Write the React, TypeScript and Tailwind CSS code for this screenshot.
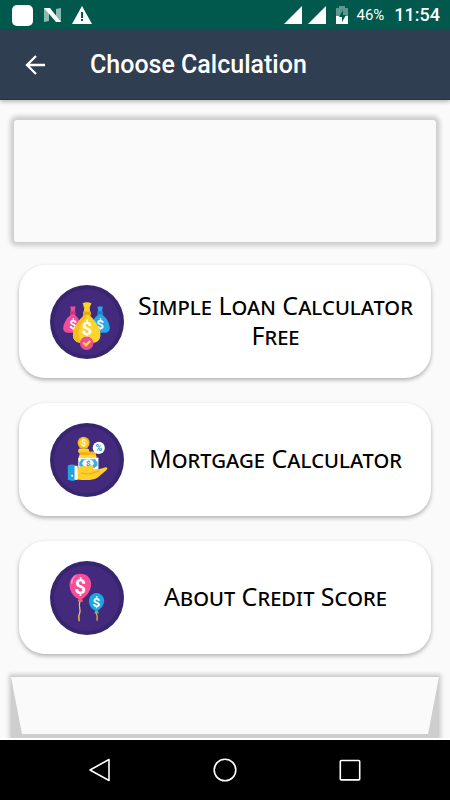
import type { ReactNode } from 'react';

function DollarSign({ x, y, size, fill = '#ffffff' }: { x: number; y: number; size: number; fill?: string }) {
  return (
    <text x={x} y={y} fontSize={size} fill={fill} fontWeight="700" textAnchor="middle" fontFamily="Roboto, sans-serif">
      $
    </text>
  );
}

function MoneyBagsIcon() {
  return (
    <svg viewBox="0 0 220 220" className="size-[74px] shrink-0" aria-hidden="true">
      <circle cx="110" cy="110" r="110" fill="#38256f" />
      <circle cx="110" cy="110" r="98" fill="#432a7d" />
      {/* Left bag */}
      <path d="M60 64h16l-2 10 1 15c12 12 20 30 19 41q-2 12-14 12H54q-14-1-15-13 2-24 22-40l1-15z" fill="#ef4d97" />
      <path d="M60 78h16v9H60z" fill="#c9357d" />
      {/* Right bag */}
      <path d="M141 64h16l-2 10 1 15c14 10 21 24 22 40q-2 12-15 13h-27q-13-2-14-12 1-26 20-41l1-15z" fill="#27a9e8" />
      <path d="M141 78h17v9h-17z" fill="#1684c9" />
      <DollarSign x={69} y={131} size={40} />
      <DollarSign x={149} y={131} size={40} />
      {/* Front bag */}
      <path d="M97 54q12-5 26 0l-5 13 2 25c18 18 31 39 30 58-2 17-12 21-25 22H93c-15-1-24-8-25-22 2-26 18-46 31-58l3-25z" fill="#fdd42c" />
      <path d="M97 54l5 13-3 25c-15 16-30 35-31 58 1 14 10 21 25 22-18-31-3-59 15-77z" fill="#f6bd19" />
      <path d="M98 79h24v10H98z" fill="#e5a817" />
      <DollarSign x={110} y={150} size={56} />
      <circle cx="109" cy="173" r="20" fill="#ef4d8b" />
      <path d="M99 171l8 8 13-13" fill="none" stroke="#ffdf3e" strokeWidth="7" />
    </svg>
  );
}

function MortgageIcon() {
  return (
    <svg viewBox="0 0 220 220" className="size-[74px] shrink-0" aria-hidden="true">
      <circle cx="110" cy="110" r="110" fill="#38256f" />
      <circle cx="110" cy="110" r="98" fill="#432a7d" />
      {/* Coin stacks */}
      <rect x="84" y="76" width="32" height="14" rx="5" fill="#ffd331" />
      <rect x="88" y="85" width="49" height="12" rx="4" fill="#f4b820" />
      <rect x="86" y="95" width="52" height="12" rx="4" fill="#ffda3c" />
      <path d="M88 92h26M92 103h40" stroke="#df9c19" strokeWidth="2" />
      <circle cx="100" cy="59" r="18" fill="#f5b51e" />
      <circle cx="100" cy="59" r="13" fill="#ffd13a" />
      <DollarSign x={100} y={68} size={25} fill="#fff7c4" />
      <circle cx="145" cy="74" r="18" fill="#ffffff" />
      <text x="145" y="84" fontSize="27" fontWeight="700" fill="#159bd2" textAnchor="middle" fontFamily="Roboto, sans-serif">
        %
      </text>
      {/* Bank note */}
      <path d="M84 103h60v36H84z" fill="#ffffff" />
      <path d="M92 108h43q2 7 6 7v13q-5 0-7 5H93q-2-5-6-5v-13q5 0 5-7z" fill="#39aee0" />
      <ellipse cx="113" cy="120" rx="17" ry="12" fill="#ffffff" />
      <DollarSign x={114} y={128} size={24} fill="#168fc8" />
      {/* Hand and cuff */}
      <path d="M78 134c14-8 26-5 36-6 8-6 17-2 14 8l-5 4c14-1 27-3 40-8 8-1 9 3 5 8l-26 22c-18 11-42 8-64 5z" fill="#ffd02c" />
      <path d="M93 148c22 8 39-1 54-7" fill="none" stroke="#f2ae1b" strokeWidth="4" />
      <path d="M71 127h11v42H71z" fill="#ffffff" />
      <path d="M53 126q10-4 20-2v48q-11 1-20-3z" fill="#20a4df" />
      <circle cx="66" cy="157" r="3" fill="#ffffff" />
    </svg>
  );
}

function BalloonsIcon() {
  return (
    <svg viewBox="0 0 220 220" className="size-[74px] shrink-0" aria-hidden="true">
      <circle cx="110" cy="110" r="110" fill="#38256f" />
      <circle cx="110" cy="110" r="98" fill="#432a7d" />
      <path d="M89 119c-6 20 4 22-1 37-5 8-2 15-1 23" fill="none" stroke="#e9c65c" strokeWidth="4" />
      <path d="M138 151c-2 10 4 11 2 18v9" fill="none" stroke="#dfa758" strokeWidth="4" />
      <path d="M90 38c20 0 34 14 32 35-2 20-17 38-32 42-18-5-31-22-32-42 0-21 13-35 32-35z" fill="#f64d9b" />
      <path d="M62 61q6-16 18-20-12 11-13 26-5 5-5-6z" fill="#ff8dbe" />
      <path d="M84 114h12l2 7H82z" fill="#f36a53" />
      <path d="M138 95c14 1 23 10 23 25-2 15-11 24-23 30-14-6-22-17-22-30 0-15 9-24 22-25z" fill="#18a8e2" />
      <path d="M134 149h9l2 7h-13z" fill="#54bd91" />
      <DollarSign x={90} y={97} size={60} />
      <DollarSign x={138} y={136} size={40} />
    </svg>
  );
}

function CalculationCard({ icon, label }: { icon: ReactNode; label: string }) {
  return (
    <button
      type="button"
      className="flex h-[113px] w-full items-center rounded-[26px] bg-white pl-[31px] pr-1 shadow-[0_2px_4px_rgba(0,0,0,0.3)]"
    >
      {icon}
      <span className="flex-1 px-2 pb-1 text-center font-['Noto_Sans',sans-serif] text-[25px] leading-[30px] text-black [font-variant-caps:small-caps]">
        {label}
      </span>
    </button>
  );
}

function SignalIcon() {
  return (
    <svg viewBox="0 0 18 18" className="size-[18px]" fill="#ffffff" aria-hidden="true">
      <path d="M18 0v18H0z" />
    </svg>
  );
}

function StatusBar() {
  return (
    <div className="flex h-[30px] items-center justify-between bg-[#00594c] pl-3 pr-[10px] text-white">
      <div className="flex items-center gap-[10px]">
        <div className="size-[21px] rounded-[5px] bg-white" />
        <svg viewBox="0 0 19 16" className="h-4 w-[19px]" aria-hidden="true">
          <path d="M1 1l5 1v12l-5 1zM13 2l5-1v14l-5-1z" fill="#8abbb1" />
          <path d="M1 1h6l11 14h-5z" fill="#ffffff" />
        </svg>
        <svg viewBox="0 0 20 18" className="h-[18px] w-5" aria-hidden="true">
          <path d="M10 0l10 18H0z" fill="#ffffff" />
          <path d="M10 6v6M10 13v2" stroke="#00594c" strokeWidth="2" />
        </svg>
      </div>
      <div className="flex items-center">
        <div className="flex gap-[6px]">
          <SignalIcon />
          <SignalIcon />
        </div>
        <svg viewBox="0 0 12 18" className="ml-[10px] h-[18px] w-3" aria-hidden="true">
          <path d="M3 0h6v2h3v8H0V2h3z" fill="#5d978d" />
          <path d="M0 10h12v8H0z" fill="#ffffff" />
          <path d="M7 4l-4 7h3v5l4-7H7z" fill="#00594c" />
        </svg>
        <span className="ml-2 text-[15px] leading-5">46%</span>
        <span className="ml-[10px] text-[18px] font-medium leading-5">11:54</span>
      </div>
    </div>
  );
}

function NavigationBar() {
  return (
    <nav className="flex h-[60px] shrink-0 items-center justify-center gap-[101px] bg-black">
      <button type="button" aria-label="Back">
        <svg viewBox="0 0 24 24" className="size-6" fill="none" stroke="#ffffff" strokeWidth="1.6" strokeLinejoin="round">
          <path d="M21 1.5v21L2 12z" />
        </svg>
      </button>
      <button type="button" aria-label="Home">
        <svg viewBox="0 0 24 24" className="size-6" fill="none" stroke="#ffffff" strokeWidth="1.6">
          <circle cx="12" cy="12" r="10.8" />
        </svg>
      </button>
      <button type="button" aria-label="Recent apps">
        <svg viewBox="0 0 24 24" className="size-6" fill="none" stroke="#ffffff" strokeWidth="1.6" strokeLinejoin="round">
          <rect x="2.3" y="2.5" width="19.4" height="19.4" rx="1" />
        </svg>
      </button>
    </nav>
  );
}

export default function App() {
  return (
    <div className="flex min-h-screen flex-col bg-[#fafafa] font-['Roboto',sans-serif]">
      <StatusBar />

      {/* Toolbar */}
      <header className="flex h-[70px] items-center border-b border-[#22344a] bg-[#2f3e51] pl-[25px] pt-px text-white shadow-[0_2px_4px_rgba(0,0,0,0.25)]">
        <button type="button" aria-label="Go back">
          <svg viewBox="0 0 20 20" className="size-5" fill="none" stroke="#ffffff" strokeWidth="2.3">
            <path d="M20 10H2M11 1l-9 9 9 9" />
          </svg>
        </button>
        <h1 className="ml-[45px] text-[25px] font-medium">Choose Calculation</h1>
      </header>

      <main className="flex flex-1 flex-col pt-5">
        {/* Banner slot */}
        <div className="mx-[14px] h-[122px] rounded-[3px] bg-[#fafafa] shadow-[0_0_4px_4px_#cecece]" />

        <div className="mt-[23px] flex flex-col gap-[25px] px-[19px]">
          <CalculationCard icon={<MoneyBagsIcon />} label="Simple Loan Calculator Free" />
          <CalculationCard icon={<MortgageIcon />} label="Mortgage Calculator" />
          <CalculationCard icon={<BalloonsIcon />} label="About Credit Score" />
        </div>

        {/* Lower banner slot, cut off by the navigation bar */}
        <div className="mt-[14px] flex flex-1 flex-col overflow-hidden border-b-2 border-white pt-2">
          <div className="mx-[11px] flex flex-1 flex-col bg-[#cecece] pb-1 pt-px shadow-[0_0_4px_2px_#cecece]">
            <div className="min-h-14 flex-1 bg-[#fafafa] [clip-path:polygon(0_0,100%_0,calc(100%-11px)_100%,11px_100%)]" />
          </div>
        </div>
      </main>

      <NavigationBar />
    </div>
  );
}
